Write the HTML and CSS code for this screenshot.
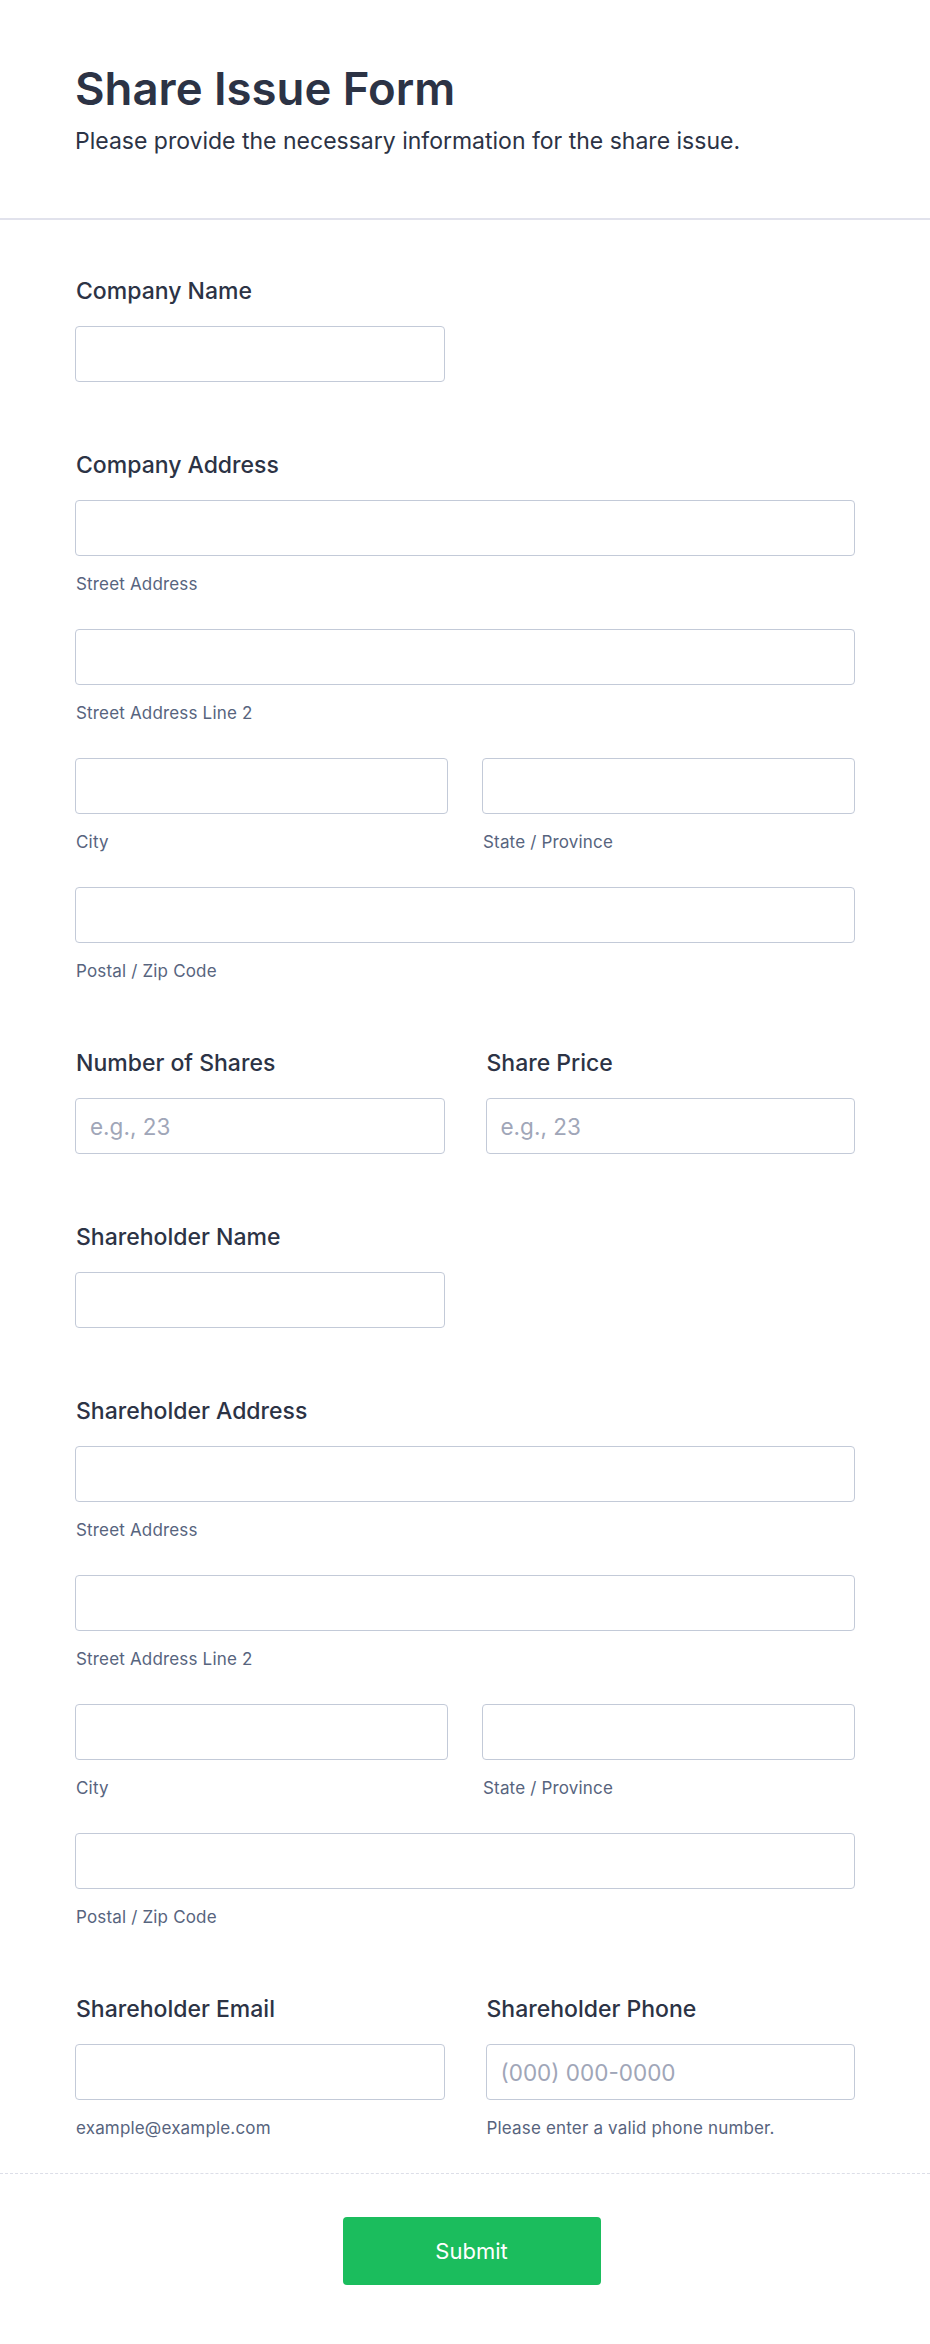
FILE: index.html
```html
<!DOCTYPE html>
<html lang="en">
<head>
<meta charset="utf-8">
<title>Share Issue Form</title>
<link rel="stylesheet" href="styles.css">
</head>
<body>
<header class="form-header">
  <h1 class="form-title">Share Issue Form</h1>
  <p class="form-subtitle">Please provide the necessary information for the share issue.</p>
</header>
<main class="form-body">
  <div class="field field-half">
    <label class="label">Company Name</label>
    <input class="input" type="text">
  </div>

  <div class="field">
    <label class="label">Company Address</label>
    <div class="address">
      <div class="sub sub-full"><input class="input" type="text"><span class="sublabel">Street Address</span></div>
      <div class="sub sub-full"><input class="input" type="text"><span class="sublabel">Street Address Line 2</span></div>
      <div class="sub"><input class="input" type="text"><span class="sublabel">City</span></div>
      <div class="sub"><input class="input" type="text"><span class="sublabel">State / Province</span></div>
      <div class="sub sub-full"><input class="input" type="text"><span class="sublabel">Postal / Zip Code</span></div>
    </div>
  </div>

  <div class="pair">
    <div class="field">
      <label class="label">Number of Shares</label>
      <input class="input" type="text" placeholder="e.g., 23">
    </div>
    <div class="field">
      <label class="label">Share Price</label>
      <input class="input" type="text" placeholder="e.g., 23">
    </div>
  </div>

  <div class="field field-half">
    <label class="label">Shareholder Name</label>
    <input class="input" type="text">
  </div>

  <div class="field">
    <label class="label">Shareholder Address</label>
    <div class="address">
      <div class="sub sub-full"><input class="input" type="text"><span class="sublabel">Street Address</span></div>
      <div class="sub sub-full"><input class="input" type="text"><span class="sublabel">Street Address Line 2</span></div>
      <div class="sub"><input class="input" type="text"><span class="sublabel">City</span></div>
      <div class="sub"><input class="input" type="text"><span class="sublabel">State / Province</span></div>
      <div class="sub sub-full"><input class="input" type="text"><span class="sublabel">Postal / Zip Code</span></div>
    </div>
  </div>

  <div class="pair">
    <div class="field">
      <label class="label">Shareholder Email</label>
      <input class="input" type="email">
      <span class="sublabel">example@example.com</span>
    </div>
    <div class="field">
      <label class="label">Shareholder Phone</label>
      <input class="input" type="tel" placeholder="(000) 000-0000">
      <span class="sublabel">Please enter a valid phone number.</span>
    </div>
  </div>
</main>
<footer class="form-footer">
  <button class="submit" type="button">Submit</button>
</footer>
</body>
</html>
```
FILE: styles.css
```css
* { box-sizing: border-box; }

body {
  margin: 0;
  background: #ffffff;
  font-family: Inter, "Noto Sans", "Liberation Sans", sans-serif;
  color: #2c3345;
}

.form-header {
  padding: 62px 75px 62px;
  border-bottom: 2px solid #e1e2ec;
}

.form-title {
  margin: 0;
  font-size: 45.5px;
  line-height: 54px;
  font-weight: 600;
  color: #2c3345;
}

.form-subtitle {
  margin: 10px 0 0;
  font-size: 23px;
  line-height: 30px;
  font-weight: 400;
  color: #2c3345;
}

.form-body {
  display: flex;
  flex-direction: column;
  gap: 68px;
  padding: 56px 75px 36px;
}

.field {
  display: flex;
  flex-direction: column;
}

.field-half {
  width: 370px;
}

.label {
  display: block;
  font-size: 23px;
  line-height: 30px;
  font-weight: 450;
  color: #2c3345;
  margin-bottom: 20px;
  padding-left: 1px;
}

.input {
  display: block;
  width: 100%;
  height: 56px;
  padding: 0 14px;
  border: 1px solid #c3cad8;
  border-radius: 4px;
  background: #ffffff;
  font-family: inherit;
  font-size: 22.5px;
  color: #2c3345;
  outline: none;
}

.input::placeholder {
  color: #a0a6b8;
}

.address {
  display: grid;
  grid-template-columns: 1fr 1fr;
  column-gap: 34px;
  row-gap: 36px;
}

.sub {
  display: flex;
  flex-direction: column;
}

.sub-full {
  grid-column: span 2;
}

.sublabel {
  display: block;
  margin-top: 19px;
  font-size: 17px;
  line-height: 18px;
  letter-spacing: 0.01em;
  color: #57647e;
  padding-left: 1px;
}

.pair {
  display: grid;
  grid-template-columns: 1fr 1fr;
  column-gap: 41px;
}

.form-footer {
  border-top: 1px dashed #dcdee8;
  padding: 43px 0 58px 13px;
  display: flex;
  justify-content: center;
}

.submit {
  width: 258px;
  height: 68px;
  border: none;
  border-radius: 4px;
  background: #1bbd5d;
  color: #ffffff;
  font-family: inherit;
  font-size: 22px;
  font-weight: 400;
}
```
